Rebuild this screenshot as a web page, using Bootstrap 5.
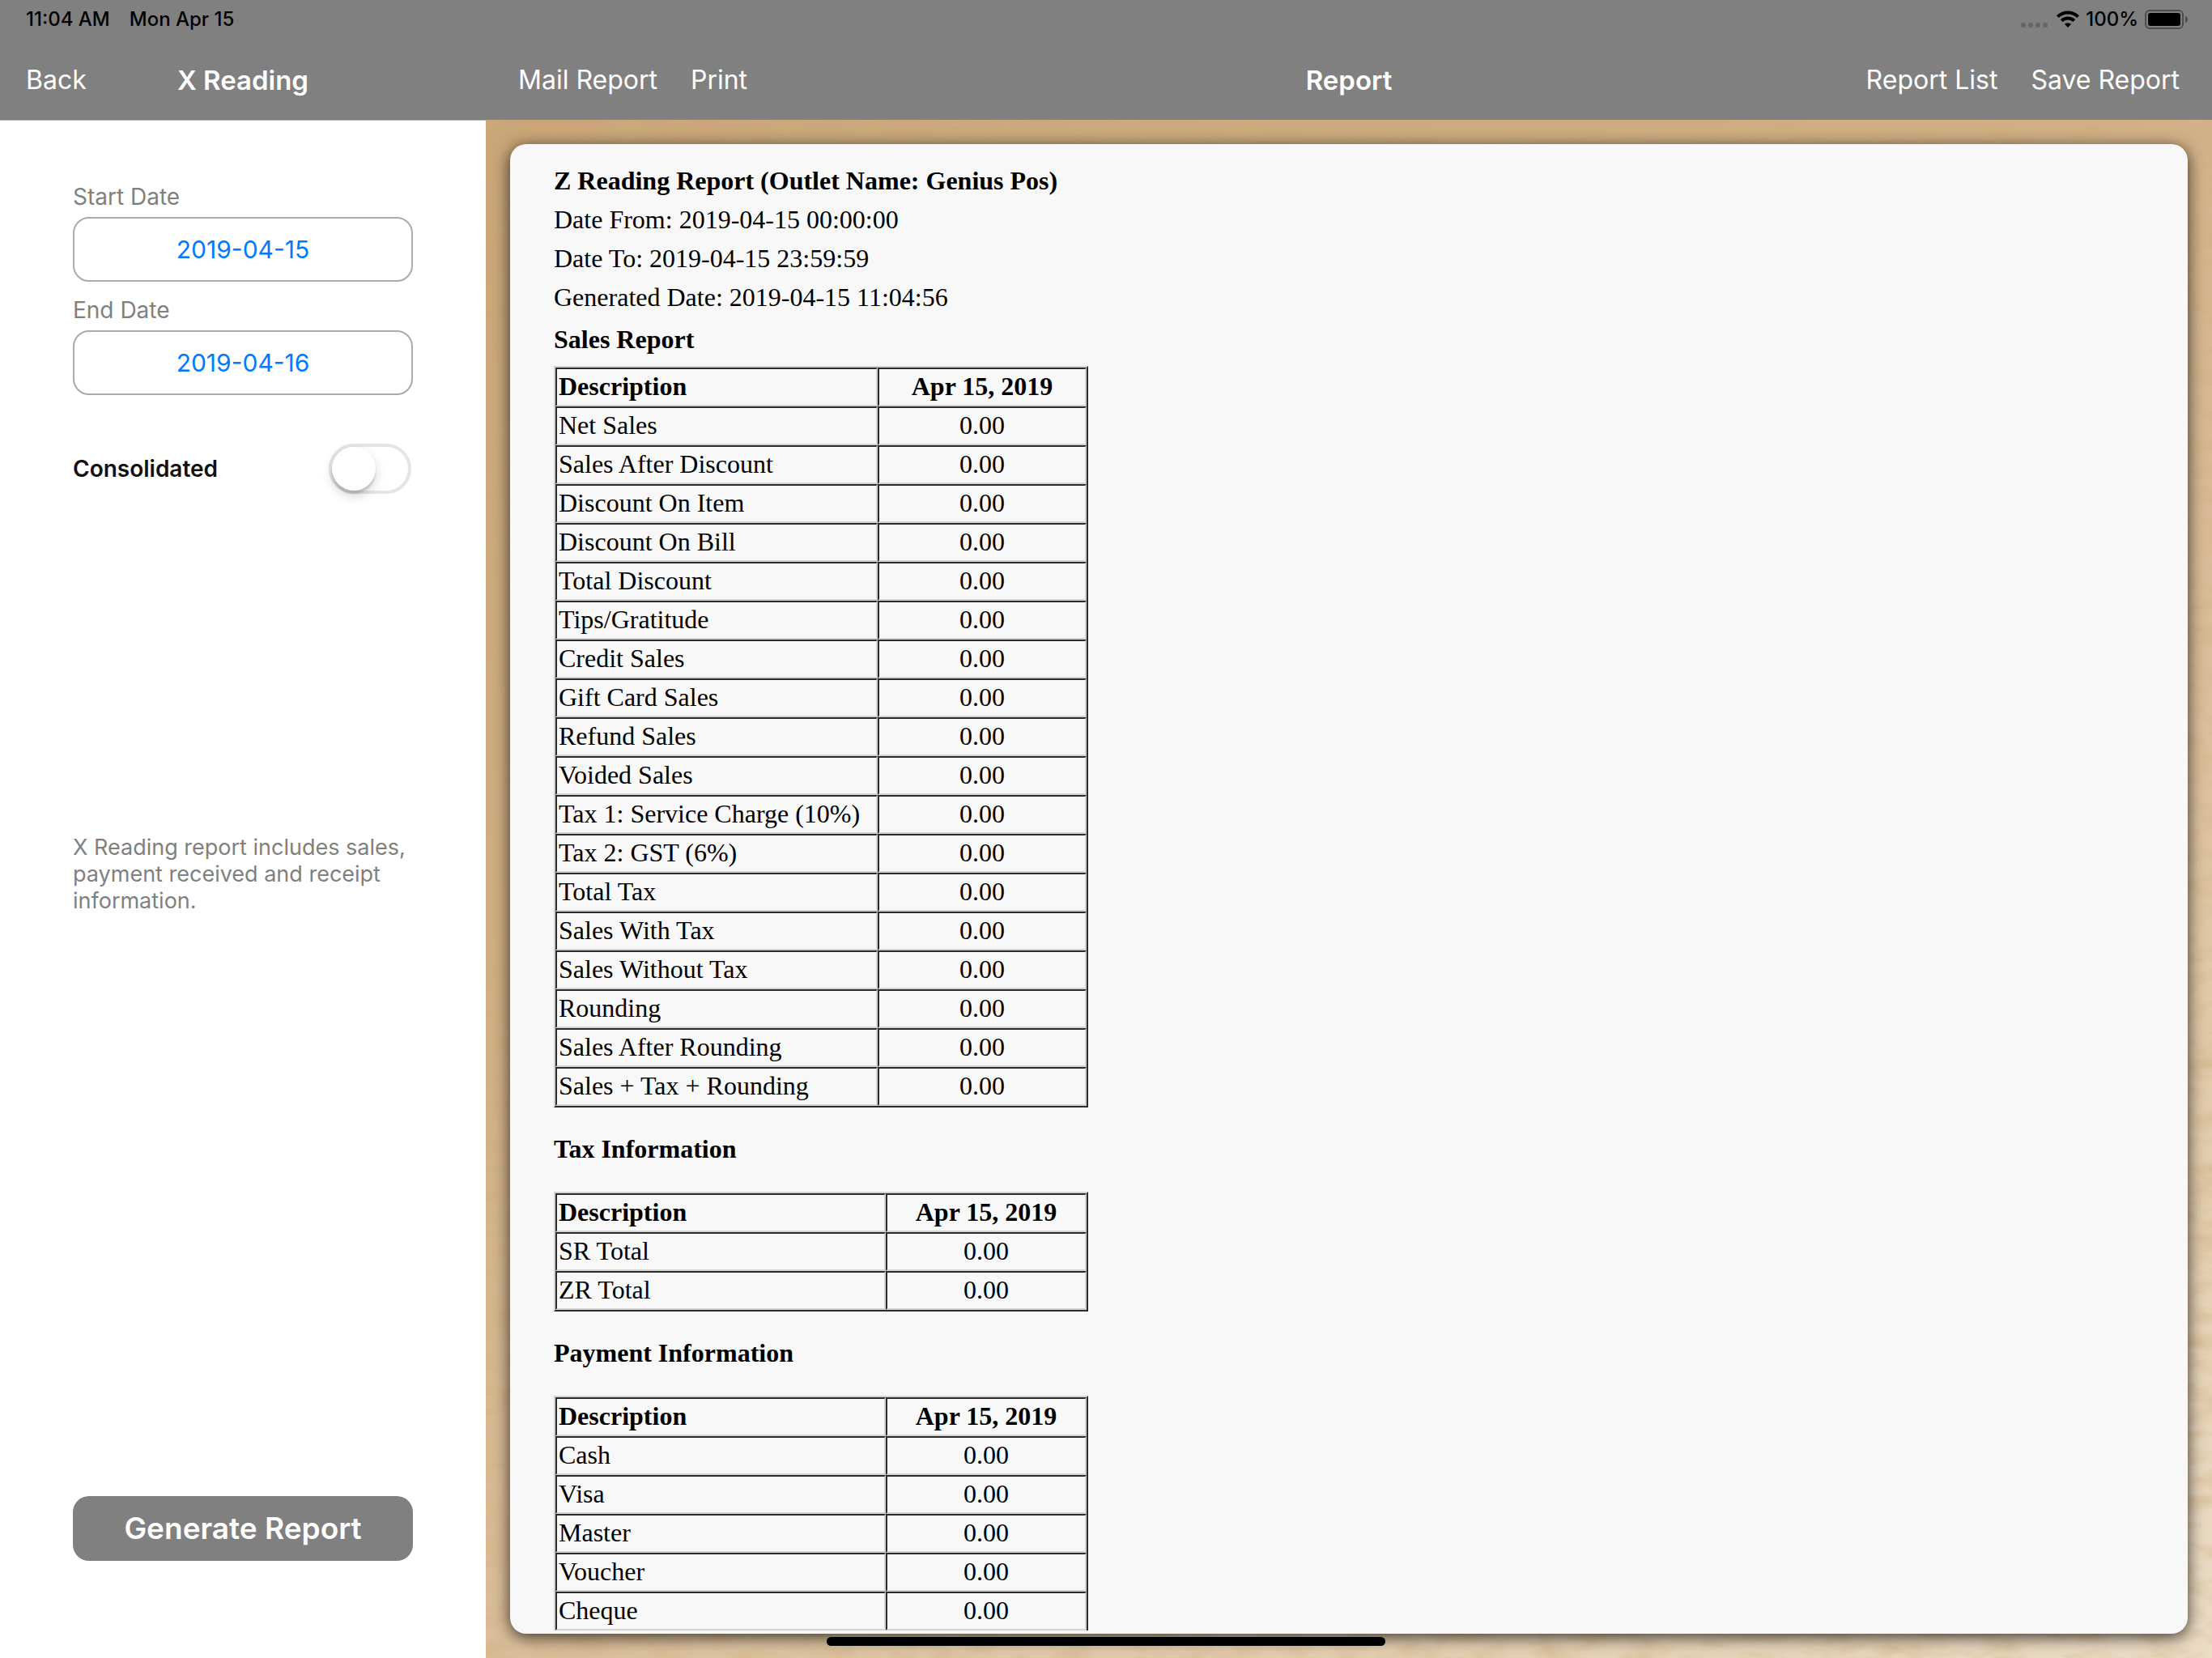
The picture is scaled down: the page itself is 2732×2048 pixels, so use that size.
<!DOCTYPE html>
<html lang="en">
<head>
    <meta charset="UTF-8">
    <meta name="viewport" content="width=device-width, initial-scale=1">
    <title>X Reading</title>
    <link href="https://cdn.jsdelivr.net/npm/bootstrap@5.3.0/dist/css/bootstrap.min.css" rel="stylesheet">
    <style>
        body {
          font-family: Inter, "Liberation Sans", sans-serif;
          font-size: 28px;
          line-height: 33px;
          color: #111;
        }
        .top-area {
          background: #808080;
          height: 148px;
        }
        .status-bar {
          height: 48px;
          padding: 0 30px 0 32px;
          font-size: 24px;
          font-weight: 500;
          line-height: 28px;
          color: #000;
        }
        .status-time {
          gap: 24px;
        }
        .side-col {
          width: 600px;
        }
        .title-bar {
          display: grid;
          grid-template-columns: 1fr auto 1fr;
          align-items: center;
          height: 101px;
          padding: 0 40px;
          color: #fff;
          font-size: 32px;
          line-height: 40px;
        }
        .side-col.title-bar {
          padding: 0 32px;
        }
        .title-bar h1 {
          font-size: 33px;
          line-height: 40px;
          font-weight: 600;
        }
        .title-bar a {
          color: #fff;
          text-decoration: none;
        }
        .bar-links {
          gap: 41px;
        }
        .side-panel {
          border-top: 1px solid #b2b2b2;
          padding: 78px 90px 120px;
        }
        .side-label {
          color: #808080;
          height: 41px;
        }
        .date-btn {
          height: 80px;
          padding: 0;
          border: 2px solid #aaa;
          border-radius: 20px;
          color: #007aff;
          font-size: 30px;
          margin-bottom: 19px;
        }
        .switch-row {
          margin-top: 41px;
          height: 62px;
        }
        .switch-row label {
          font-weight: 600;
        }
        .ios-switch {
          appearance: none;
          width: 102px;
          height: 62px;
          margin: 0 2px 0 0;
          border: 4px solid #e5e5e5;
          border-radius: 31px;
          background: #fff;
        }
        .ios-switch::before {
          content: "";
          display: block;
          width: 54px;
          height: 54px;
          border-radius: 50%;
          background: #fff;
          box-shadow: 0 6px 14px rgba(0, 0, 0, .18), 0 4px 2px rgba(0, 0, 0, .12);
        }
        .ios-switch:checked {
          background: #4cd964;
          border-color: #4cd964;
        }
        .ios-switch:checked::before {
          margin-left: 40px;
        }
        .side-note {
          color: #808080;
          font-size: 27px;
          margin: 420px 0 0;
        }
        .generate-btn {
          height: 80px;
          padding: 0;
          border-radius: 20px;
          background: #808080;
          color: #fff;
          font-size: 37px;
          font-weight: 600;
        }
        .wood {
          min-width: 0;
          padding: 30px;
          background: linear-gradient(150deg, #c9a578, #d0af85 35%, #dcc19e 65%, #ecdcc6);
        }
        .wood-grain {
          position: absolute;
          inset: 0;
          width: 100%;
          height: 100%;
        }
        .sheet {
          background: #f8f8f8;
          border-radius: 20px;
          padding: 21px 54px 4px;
          box-shadow: 0 4px 20px rgba(0, 0, 0, .75);
        }
        .report {
          font-family: "Liberation Serif", serif;
          font-size: 32px;
          line-height: 40px;
          color: #000;
        }
        .report-head {
          line-height: 48px;
          margin-bottom: 8px;
        }
        .report h2 {
          font-size: 32px;
          line-height: 40px;
          font-weight: 700;
          margin: 31px 0 33px;
        }
        .report h2.first {
          margin: 0 0 13px;
        }
        .report-table {
          width: 660px;
          table-layout: fixed;
          border-collapse: separate;
          border-spacing: 0;
          border: 2px solid;
          border-color: #d3d3d3 #2c2c2c #2c2c2c #d3d3d3;
        }
        .report-table th,
        .report-table td {
          border: 2px solid;
          border-color: #2c2c2c #d3d3d3 #d3d3d3 #2c2c2c;
          padding: 1px 2px 3px;
          text-align: center;
        }
        .report-table th:first-child,
        .report-table td:first-child {
          text-align: left;
        }
        .report-table th:first-child {
          width: 408px;
        }
        .report-table.sales-table th:first-child {
          width: 398px;
        }
        .home-bar {
          position: absolute;
          left: 50%;
          bottom: 15px;
          width: 690px;
          height: 11px;
          margin-left: -345px;
          border-radius: 6px;
          background: #000;
        }
    </style>
</head>
<body class="vh-100 d-flex flex-column overflow-hidden position-relative">

<!-- Header -->
<header class="top-area flex-shrink-0">
    <div class="status-bar d-flex align-items-center justify-content-between">
        <div class="status-time d-flex">
            <span>11:04 AM</span>
            <span>Mon Apr 15</span>
        </div>
        <div class="d-flex align-items-center">
            <svg class="me-2" width="36" height="24" viewBox="0 0 36 24" fill="#666">
                <rect x="0" y="16" width="6" height="6" rx="2"/>
                <rect x="9" y="16" width="6" height="6" rx="2"/>
                <rect x="18" y="16" width="6" height="6" rx="2"/>
                <rect x="27" y="16" width="6" height="6" rx="2"/>
            </svg>
            <svg class="me-2" width="28" height="24" viewBox="0 0 28 24">
                <g fill="none" stroke="#000" stroke-width="4">
                    <path d="M1.4 8.6a18 18 0 0 1 25.2 0"/>
                    <path d="M6.2 13.6a11.2 11.2 0 0 1 15.6 0"/>
                </g>
                <path d="M14 22l-4-4.200a6 6 0 0 1 8 0z"/>
            </svg>
            <span class="me-2">100%</span>
            <svg width="53" height="24" viewBox="0 0 53 24">
                <rect x="1" y="1" width="46" height="22" rx="5" fill="none" stroke="#4d4d4d" stroke-width="2"/>
                <rect x="4" y="4" width="40" height="16" rx="3"/>
                <path d="M50 8c4 1 4 7 0 8z" fill="#4d4d4d"/>
            </svg>
        </div>
    </div>
    <div class="d-flex">
        <nav class="side-col title-bar flex-shrink-0">
            <a href="#">Back</a>
            <h1 class="m-0">X Reading</h1>
        </nav>
        <nav class="title-bar flex-grow-1">
            <div class="bar-links d-flex">
                <a href="#">Mail Report</a>
                <a href="#">Print</a>
            </div>
            <h1 class="m-0">Report</h1>
            <div class="bar-links d-flex justify-content-end">
                <a href="#">Report List</a>
                <a href="#">Save Report</a>
            </div>
        </nav>
    </div>
</header>

<div class="d-flex flex-grow-1 overflow-hidden">
    <!-- Filters -->
    <aside class="side-col side-panel bg-white flex-shrink-0 d-flex flex-column">
        <label class="side-label" for="start-date">Start Date</label>
        <button id="start-date" type="button" class="date-btn btn w-100">2019-04-15</button>
        <label class="side-label" for="end-date">End Date</label>
        <button id="end-date" type="button" class="date-btn btn w-100">2019-04-16</button>
        <div class="switch-row d-flex align-items-center justify-content-between">
            <label for="consolidated">Consolidated</label>
            <input id="consolidated" class="ios-switch" type="checkbox" role="switch">
        </div>
        <p class="side-note">X Reading report includes sales, payment received and receipt information.</p>
        <button type="button" class="generate-btn btn w-100 mt-auto">Generate Report</button>
    </aside>

    <!-- Report -->
    <main class="wood flex-grow-1 position-relative d-flex">
        <svg class="wood-grain" aria-hidden="true">
            <filter id="grain" x="0" y="0" width="100%" height="100%">
                <feTurbulence type="fractalNoise" baseFrequency="0.02 0.05" numOctaves="3" seed="4"/>
                <feColorMatrix values="0 0 0 0 .6  0 0 0 0 .42  0 0 0 0 .2  1 0 0 0 -.4"/>
            </filter>
            <rect width="100%" height="100%" filter="url(#grain)"/>
        </svg>
        <div class="sheet flex-grow-1 position-relative d-flex">
            <div class="report flex-grow-1 overflow-hidden">
                <div class="report-head">
                    <strong>Z Reading Report (Outlet Name: Genius Pos)</strong><br>
                    Date From: 2019-04-15 00:00:00<br>
                    Date To: 2019-04-15 23:59:59<br>
                    Generated Date: 2019-04-15 11:04:56
                </div>

                <h2 class="first">Sales Report</h2>
                <table class="report-table sales-table">
                    <thead><tr><th>Description</th><th>Apr 15, 2019</th></tr></thead>
                    <tbody id="sales-rows"></tbody>
                </table>

                <h2>Tax Information</h2>
                <table class="report-table">
                    <thead><tr><th>Description</th><th>Apr 15, 2019</th></tr></thead>
                    <tbody id="tax-rows"></tbody>
                </table>

                <h2>Payment Information</h2>
                <table class="report-table">
                    <thead><tr><th>Description</th><th>Apr 15, 2019</th></tr></thead>
                    <tbody id="payment-rows"></tbody>
                </table>
            </div>
        </div>
    </main>
</div>

<div class="home-bar"></div>

<script src="https://cdn.jsdelivr.net/npm/bootstrap@5.3.0/dist/js/bootstrap.bundle.min.js"></script>
<script>
    const reports = {
      'sales-rows': [
        'Net Sales', 'Sales After Discount', 'Discount On Item', 'Discount On Bill',
        'Total Discount', 'Tips/Gratitude', 'Credit Sales', 'Gift Card Sales',
        'Refund Sales', 'Voided Sales', 'Tax 1: Service Charge (10%)', 'Tax 2: GST (6%)',
        'Total Tax', 'Sales With Tax', 'Sales Without Tax', 'Rounding',
        'Sales After Rounding', 'Sales + Tax + Rounding'
      ],
      'tax-rows': ['SR Total', 'ZR Total'],
      'payment-rows': ['Cash', 'Visa', 'Master', 'Voucher', 'Cheque']
    };

    for (const id in reports) {
      const body = document.getElementById(id);
      for (const name of reports[id]) {
        const row = body.insertRow();
        row.insertCell().textContent = name;
        row.insertCell().textContent = '0.00';
      }
    }
</script>
</body>
</html>
